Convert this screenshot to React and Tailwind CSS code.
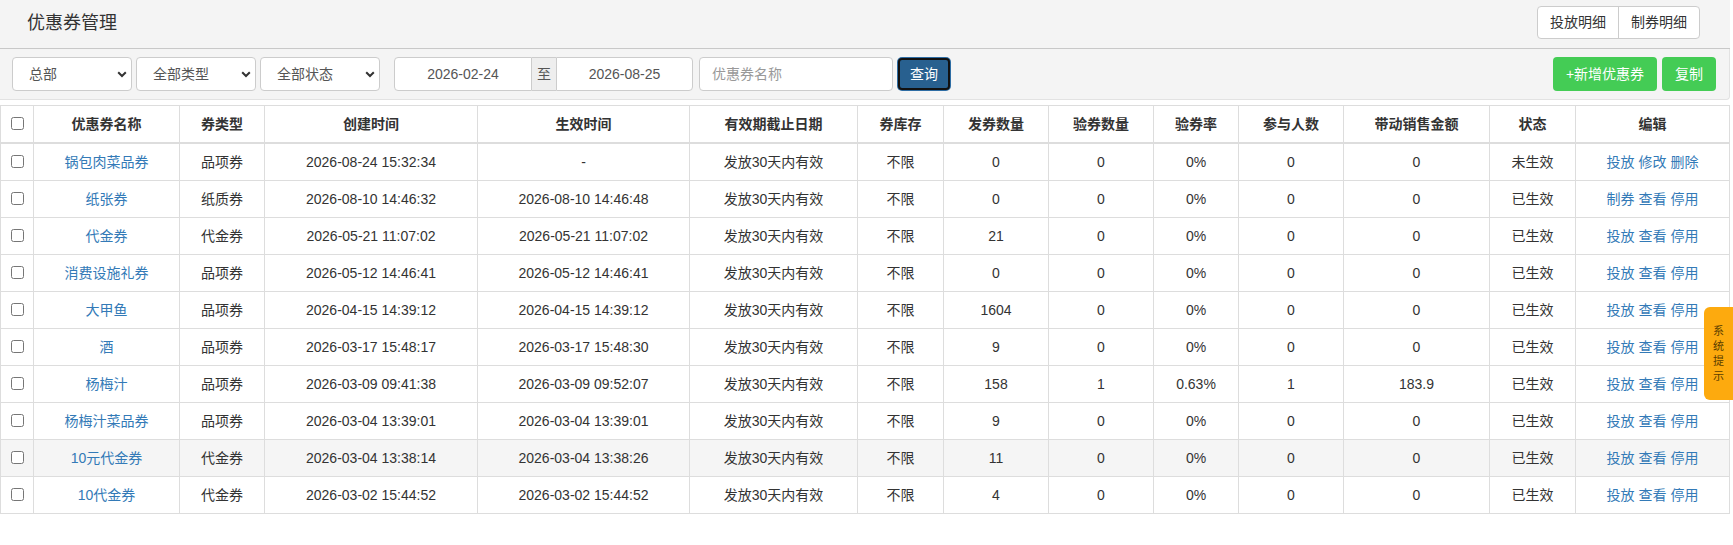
import React from "react";

const rows = [
  ["锅包肉菜品券", "品项券", "2026-08-24 15:32:34", "-", "0", "0", "0%", "0", "0", "未生效", ["投放", "修改", "删除"]],
  ["纸张券", "纸质券", "2026-08-10 14:46:32", "2026-08-10 14:46:48", "0", "0", "0%", "0", "0", "已生效", ["制券", "查看", "停用"]],
  ["代金券", "代金券", "2026-05-21 11:07:02", "2026-05-21 11:07:02", "21", "0", "0%", "0", "0", "已生效", ["投放", "查看", "停用"]],
  ["消费设施礼券", "品项券", "2026-05-12 14:46:41", "2026-05-12 14:46:41", "0", "0", "0%", "0", "0", "已生效", ["投放", "查看", "停用"]],
  ["大甲鱼", "品项券", "2026-04-15 14:39:12", "2026-04-15 14:39:12", "1604", "0", "0%", "0", "0", "已生效", ["投放", "查看", "停用"]],
  ["酒", "品项券", "2026-03-17 15:48:17", "2026-03-17 15:48:30", "9", "0", "0%", "0", "0", "已生效", ["投放", "查看", "停用"]],
  ["杨梅汁", "品项券", "2026-03-09 09:41:38", "2026-03-09 09:52:07", "158", "1", "0.63%", "1", "183.9", "已生效", ["投放", "查看", "停用"]],
  ["杨梅汁菜品券", "品项券", "2026-03-04 13:39:01", "2026-03-04 13:39:01", "9", "0", "0%", "0", "0", "已生效", ["投放", "查看", "停用"]],
  ["10元代金券", "代金券", "2026-03-04 13:38:14", "2026-03-04 13:38:26", "11", "0", "0%", "0", "0", "已生效", ["投放", "查看", "停用"]],
  ["10代金券", "代金券", "2026-03-02 15:44:52", "2026-03-02 15:44:52", "4", "0", "0%", "0", "0", "已生效", ["投放", "查看", "停用"]],
];

const headers = [
  ["优惠券名称", "w-[146px]"],
  ["券类型", "w-[85px]"],
  ["创建时间", "w-[213px]"],
  ["生效时间", "w-[212px]"],
  ["有效期截止日期", "w-[168px]"],
  ["券库存", "w-[86px]"],
  ["发券数量", "w-[105px]"],
  ["验券数量", "w-[105px]"],
  ["验券率", "w-[85px]"],
  ["参与人数", "w-[105px]"],
  ["带动销售金额", "w-[146px]"],
  ["状态", "w-[86px]"],
  ["编辑", ""],
];

function Select({ label }) {
  return (
    <div className="relative w-[120px] h-[34px]">
      <select className="appearance-none w-full h-full bg-white border border-[#ccc] rounded pl-[16px] pr-6 text-[14px] text-[#555] outline-none">
        <option>{label}</option>
      </select>
      <svg
        className="absolute right-[5px] top-[14px] pointer-events-none"
        width="10"
        height="7"
        viewBox="0 0 10 7"
      >
        <path d="M1.2 1.2L5 5l3.8-3.8" fill="none" stroke="#333" strokeWidth="2" />
      </svg>
    </div>
  );
}

export default function App() {
  return (
    <div
      className="w-[1730px] bg-white text-[#333] text-[14px]"
      style={{ fontFamily: '"Liberation Sans", "Noto Sans CJK SC", sans-serif' }}
    >
      {/* title bar */}
      <div className="h-[49px] bg-[#f4f4f4] border-b border-[#c8c8c8] flex items-center justify-between pl-[27px] pr-[30px]">
        <h1 className="text-[18px] leading-none text-[#333] -mt-[3px]">优惠券管理</h1>
        <div className="flex h-[33px] -mt-[4px] bg-white border border-[#ccc] rounded">
          <button className="w-[81px] border-r border-[#ccc] text-[14px] text-[#333]">投放明细</button>
          <button className="w-[80px] text-[14px] text-[#333]">制券明细</button>
        </div>
      </div>

      {/* filter bar */}
      <div className="h-[51px] bg-[#f4f4f4] border-r border-b border-[#e2e2e2] rounded-br flex items-start pt-[8px] pl-[12px] pr-[13px]">
        <div className="flex gap-[4px]">
          <Select label="总部" />
          <Select label="全部类型" />
          <Select label="全部状态" />
        </div>
        <div className="flex ml-[14px] h-[34px]">
          <input
            readOnly
            value="2026-02-24"
            className="w-[138px] h-full border border-[#ccc] rounded-l bg-white text-center text-[14px] text-[#555] outline-none"
          />
          <span className="w-[24px] h-full flex items-center justify-center bg-[#eee] border-y border-[#ccc] text-[#555]">至</span>
          <input
            readOnly
            value="2026-08-25"
            className="w-[137px] h-full border border-[#ccc] rounded-r bg-white text-center text-[14px] text-[#555] outline-none"
          />
        </div>
        <input
          placeholder="优惠券名称"
          className="ml-[6px] w-[194px] h-[34px] border border-[#ccc] rounded bg-white px-[12px] text-[14px] placeholder:text-[#999] outline-none"
        />
        <button className="ml-[5px] mt-[1px] w-[52px] h-[32px] rounded bg-[#28608f] border-2 border-[#111] ring-1 ring-[#2e6da4] text-white text-[14px]">
          查询
        </button>
        <div className="ml-auto flex gap-[5px]">
          <button className="w-[104px] h-[34px] rounded bg-[#44cc55] text-white text-[14px]">+新增优惠券</button>
          <button className="w-[54px] h-[34px] rounded bg-[#44cc55] text-white text-[14px]">复制</button>
        </div>
      </div>

      {/* table */}
      <table className="mt-[5px] w-[1730px] table-fixed border-collapse border border-[#ddd]">
        <thead>
          <tr>
            <th className="w-[33px] border border-b-2 border-[#ddd] p-0 text-center align-middle leading-5">
              <input type="checkbox" className="w-[13px] h-[13px] align-middle mt-[-3px]" />
            </th>
            {headers.map(([h, w]) => (
              <th key={h} className={`${w} border border-b-2 border-[#ddd] px-2 py-2 text-center font-bold leading-5 text-[#333]`}>
                {h}
              </th>
            ))}
          </tr>
        </thead>
        <tbody>
          {rows.map((r, i) => (
            <tr key={i} className={i === 8 ? "bg-[#f5f5f5]" : ""}>
              <td className="border border-[#ddd] p-0 text-center leading-5">
                <input type="checkbox" className="w-[13px] h-[13px] align-middle mt-[-3px]" />
              </td>
              <td className="border border-[#ddd] px-2 py-2 text-center leading-5">
                <a className="text-[#337ab7]">{r[0]}</a>
              </td>
              <td className="border border-[#ddd] px-2 py-2 text-center leading-5">{r[1]}</td>
              <td className="border border-[#ddd] px-2 py-2 text-center leading-5">{r[2]}</td>
              <td className="border border-[#ddd] px-2 py-2 text-center leading-5">{r[3]}</td>
              <td className="border border-[#ddd] px-2 py-2 text-center leading-5">发放30天内有效</td>
              <td className="border border-[#ddd] px-2 py-2 text-center leading-5">不限</td>
              <td className="border border-[#ddd] px-2 py-2 text-center leading-5">{r[4]}</td>
              <td className="border border-[#ddd] px-2 py-2 text-center leading-5">{r[5]}</td>
              <td className="border border-[#ddd] px-2 py-2 text-center leading-5">{r[6]}</td>
              <td className="border border-[#ddd] px-2 py-2 text-center leading-5">{r[7]}</td>
              <td className="border border-[#ddd] px-2 py-2 text-center leading-5">{r[8]}</td>
              <td className="border border-[#ddd] px-2 py-2 text-center leading-5">{r[9]}</td>
              <td className="border border-[#ddd] px-2 py-2 text-center leading-5">
                {r[10].map((a, j) => (
                  <a key={a} className={`text-[#337ab7] ${j > 0 ? "ml-[4px]" : ""}`}>
                    {a}
                  </a>
                ))}
              </td>
            </tr>
          ))}
        </tbody>
      </table>

      {/* floating tab */}
      <div className="fixed right-0 top-[307px] w-[29px] h-[93px] bg-[#fdaa0e] rounded-l-[6px] flex flex-col items-center justify-center text-[11px] leading-[15px] text-[#5a3d00]">
        <span>系</span>
        <span>统</span>
        <span>提</span>
        <span>示</span>
      </div>
    </div>
  );
}
